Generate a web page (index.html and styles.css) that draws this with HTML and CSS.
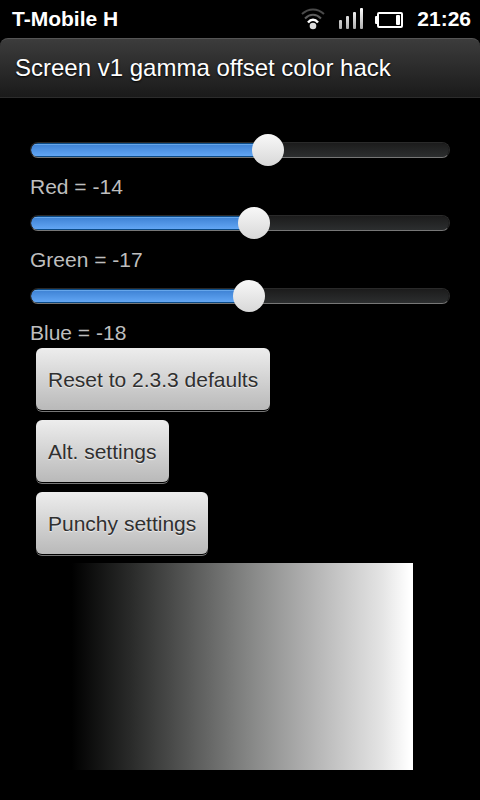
FILE: index.html
```html
<!DOCTYPE html>
<html lang="en">

<head>
    <meta charset="UTF-8">
    <meta name="viewport" content="width=device-width, initial-scale=1.0">
    <title>Screen v1 gamma offset color hack</title>
    <link rel="stylesheet" href="styles.css">
</head>

<body>

    <!-- Status Bar -->
    <div class="status-bar">
        <span class="carrier">T-Mobile H</span>
        <div class="status-icons">
            <svg class="icon-wifi" width="26" height="22" viewBox="0 0 26 22" fill="none" stroke-width="2">
                <path d="M1 6 C7.500 0 16.500 0 23 6" stroke="#4a4a4a" />
                <path d="M4 10.500 C9 5.500 15 5.500 20 10.500" stroke="#5c5c5c" />
                <path d="M7 14.500 C10 10.800 14 10.800 17 14.500" stroke="#fff" stroke-width="2.400" />
                <circle cx="12" cy="18" r="3.300" fill="#ddd" />
            </svg>
            <svg class="icon-signal" width="24" height="22" viewBox="0 0 24 22">
                <defs>
                    <linearGradient id="bars" x1="0" y1="0" x2="0" y2="22" gradientUnits="userSpaceOnUse">
                        <stop offset="0" stop-color="#fff" />
                        <stop offset="1" stop-color="#aaa" />
                    </linearGradient>
                </defs>
                <g fill="url(#bars)">
                    <rect x="0" y="12" width="3" height="9" rx="1" />
                    <rect x="7" y="8" width="3" height="13" rx="1" />
                    <rect x="14" y="4" width="3" height="17" rx="1" />
                    <rect x="21" y="0" width="3" height="21" rx="1" />
                </g>
            </svg>
            <svg class="icon-battery" width="28" height="18" viewBox="0 0 28 18">
                <rect x="3" y="3" width="24" height="14" rx="1" fill="none" stroke="#fff" stroke-width="2" />
                <rect x="0" y="6" width="3" height="8" rx="1" fill="#fff" />
                <rect x="21" y="5" width="4" height="10" rx="1" fill="#fff" />
            </svg>
            <span class="clock">21:26</span>
        </div>
    </div>

    <!-- Title Bar -->
    <div class="title-bar">
        <h1>Screen v1 gamma offset color hack</h1>
    </div>

    <div class="container">
        <!-- Color Sliders -->
        <div class="sliders">
            <div class="slider-item">
                <input type="range" id="red" min="-61" max="21" value="-14" style="--fill: 57%">
                <label for="red">Red = -14</label>
            </div>
            <div class="slider-item">
                <input type="range" id="green" min="-61" max="21" value="-17" style="--fill: 54%">
                <label for="green">Green = -17</label>
            </div>
            <div class="slider-item">
                <input type="range" id="blue" min="-61" max="21" value="-18" style="--fill: 52%">
                <label for="blue">Blue = -18</label>
            </div>
        </div>

        <!-- Presets -->
        <div class="presets">
            <button type="button">Reset to 2.3.3 defaults</button>
            <button type="button">Alt. settings</button>
            <button type="button">Punchy settings</button>
        </div>

        <!-- Gray ramp preview -->
        <div class="gradient"></div>
    </div>

    <script>
        document.querySelectorAll('.slider-item input').forEach(function (slider) {
            slider.addEventListener('input', function () {
                const label = slider.nextElementSibling;
                const name = label.textContent.split(' = ')[0];
                const percent = (slider.value - slider.min) / (slider.max - slider.min) * 100;
                label.textContent = name + ' = ' + slider.value;
                slider.style.setProperty('--fill', percent + '%');
            });
        });
    </script>

</body>

</html>
```

FILE: styles.css
```css
/* Basic reset */
* {
    margin: 0;
    padding: 0;
    box-sizing: border-box;
}

body {
    background-color: #000;
    color: #bebebe;
    font-family: "Liberation Sans", Arial, sans-serif;
    font-size: 21px;
    line-height: 24px;
    min-height: 100vh;
}

/* Status Bar */
.status-bar {
    display: flex;
    justify-content: space-between;
    align-items: center;
    height: 38px;
    padding: 0 9px 0 12px;
    color: #fff;
    font-weight: bold;
}

.status-icons {
    display: flex;
    align-items: center;
    gap: 12px;
}

.clock {
    padding-left: 2px;
}

/* Title Bar */
.title-bar {
    height: 60px;
    padding: 0 15px;
    display: flex;
    align-items: center;
    background: linear-gradient(#3c3c3c, #1a1a1a);
    border-top: 1px solid #555;
    border-bottom: 1px solid #2c2c2c;
    border-radius: 8px 8px 0 0;
}

.title-bar h1 {
    color: #fff;
    font-size: 24px;
    font-weight: normal;
    text-shadow: 0 1px 2px #000;
}

.container {
    padding: 36px 30px 30px;
}

/* Sliders */
.sliders {
    display: flex;
    flex-direction: column;
    gap: 8px;
}

.slider-item {
    display: flex;
    flex-direction: column;
    gap: 9px;
}

.slider-item input {
    appearance: none;
    display: block;
    width: 100%;
    height: 32px;
    background: transparent;
}

.slider-item input::-webkit-slider-runnable-track {
    height: 16px;
    border: 1px solid #2a2a2a;
    border-bottom-color: #777;
    border-radius: 8px;
    background:
        linear-gradient(#0b4a85 0 1px, #66a6ea 1px 2px, #4084d6 2px, #62a6f4 13px, #0b4a85 13px) 0 0 / var(--fill) 100% no-repeat,
        linear-gradient(#1c1c1c, #2c2e2f);
    background-clip: padding-box;
}

.slider-item input::-webkit-slider-thumb {
    appearance: none;
    width: 32px;
    height: 32px;
    margin-top: -9px;
    border-radius: 50%;
    background: linear-gradient(#f8f8f8, #d8d8d8);
}

/* Preset buttons */
.presets {
    display: flex;
    flex-direction: column;
    align-items: flex-start;
    gap: 10px;
    margin: 3px 6px 9px;
}

.presets button {
    height: 62px;
    padding: 2px 12px 0;
    border: none;
    border-radius: 6px;
    background: linear-gradient(#ededed, #b9b9b9);
    box-shadow: 0 1px 0 #000, 0 2px 0 #777;
    color: #303030;
    font-family: inherit;
    font-size: 21px;
    text-shadow: 0 1px 1px #eee;
    cursor: pointer;
}

.presets button:active {
    background: #a8a8a8;
}

/* Gray ramp */
.gradient {
    width: 100%;
    max-width: 345px;
    aspect-ratio: 5 / 3;
    margin: 0 auto;
    background: linear-gradient(to right, #000 1%, #292a29 18%, #848584 52%, #b6b6b6 72%, #e4e4e4 91%, #fff 99%);
}
```
